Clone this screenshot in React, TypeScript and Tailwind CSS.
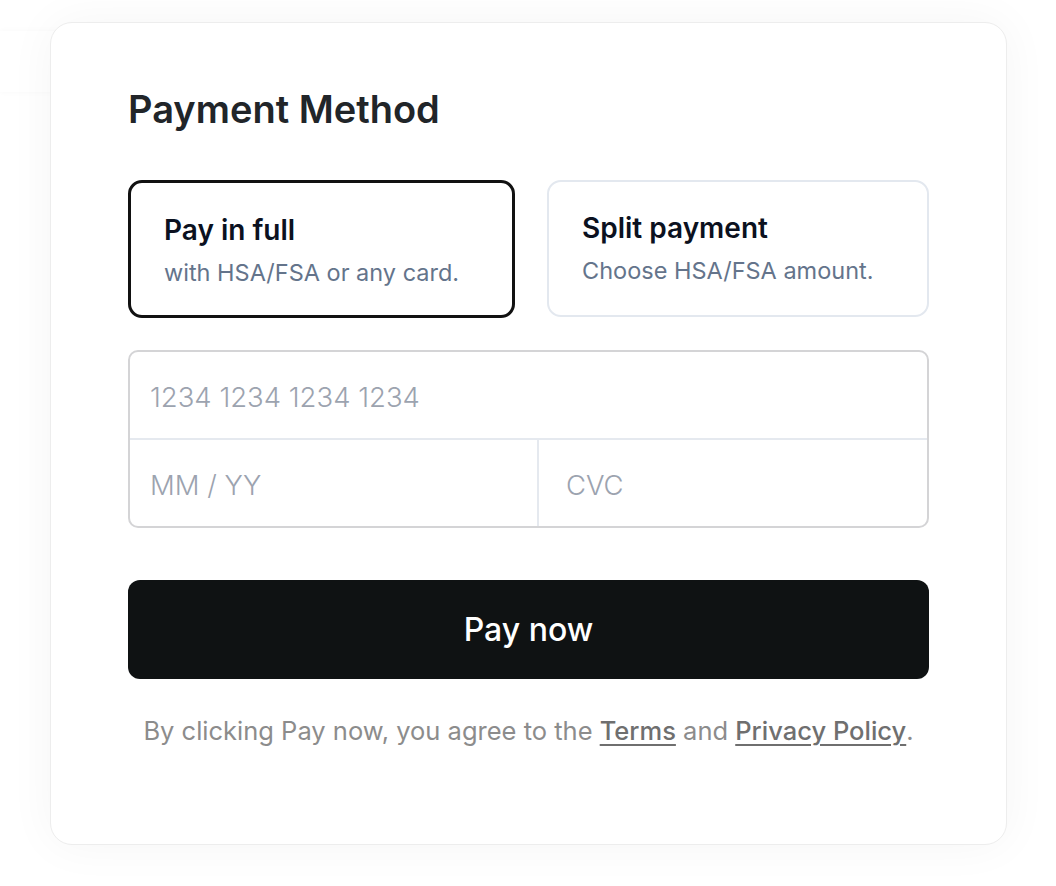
import { useState } from "react";

type Plan = "full" | "split";

const plans: { id: Plan; title: string; note: string }[] = [
  { id: "full", title: "Pay in full", note: "with HSA/FSA or any card." },
  { id: "split", title: "Split payment", note: "Choose HSA/FSA amount." },
];

export default function App() {
  const [plan, setPlan] = useState<Plan>("full");

  return (
    <div
      className="relative min-h-[886px] w-full bg-white pt-[22px] pl-[50px] pr-[49px] pb-[41px]"
      style={{ fontFamily: "Inter, 'Noto Sans', sans-serif" }}
    >
      {/* faint leftover strip in the top-left corner */}
      <div className="absolute left-0 top-[31px] h-[61px] w-[172px] bg-white/70 shadow-[0_0_6px_rgba(0,0,0,0.03)]" />

      <div className="relative rounded-[22px] border border-[#ededed] bg-white px-[77px] pt-[63px] pb-[97px] shadow-[0_0_48px_rgba(0,0,0,0.045)]">
        <h2 className="text-[38px] font-semibold leading-[46px] text-[#212529]">Payment Method</h2>

        {/* plan options */}
        <div className="mt-[48px] grid grid-cols-[387px_1fr] gap-8">
          {plans.map(p => {
            const active = plan === p.id;
            return (
              <button
                key={p.id}
                onClick={() => setPlan(p.id)}
                className={
                  active
                    ? "flex h-[138px] flex-col items-start justify-start rounded-[14px] border-[3px] border-[#111111] px-[33px] pt-[30px] text-left"
                    : "flex h-[137px] flex-col items-start justify-start rounded-[14px] border-2 border-[#e3e8ef] px-[33px] pt-[29px] text-left"
                }
              >
                <p className="text-[28px] font-semibold leading-[34px] text-[#0b1120]">{p.title}</p>
                <p className="mt-[11px] text-[23.5px] leading-[30px] text-[#64748b]">{p.note}</p>
              </button>
            );
          })}
        </div>

        {/* card fields */}
        <div className="mt-[32px] overflow-hidden rounded-[10px] border-2 border-[#d4d4d6]">
          <input
            placeholder="1234 1234 1234 1234"
            className="block h-[86px] w-full px-[20px] pt-[3px] text-[27.5px] font-light text-[#374151] outline-none placeholder:text-[#9ca3af]"
          />
          <div className="flex border-t-2 border-[#e5e9ef]">
            <input
              placeholder="MM / YY"
              className="block h-[86px] w-[407px] px-[20px] pt-[3px] text-[27.5px] font-light text-[#374151] outline-none placeholder:text-[#9ca3af]"
            />
            <input
              placeholder="CVC"
              className="block h-[86px] min-w-0 flex-1 border-l-2 border-[#e5e9ef] px-[27px] pt-[3px] text-[27.5px] font-light text-[#374151] outline-none placeholder:text-[#9ca3af]"
            />
          </div>
        </div>

        <button className="mt-[52px] flex h-[99px] w-full items-center justify-center rounded-[12px] bg-[#0f1213] text-[32px] font-medium text-white">
          Pay now
        </button>

        <p className="mt-[36px] text-center text-[25.5px] leading-[32px] text-[#8c8c8c]">
          By clicking Pay now, you agree to the{" "}
          <a href="#" className="font-medium text-[#6f6f6f] underline underline-offset-4">
            Terms
          </a>{" "}
          and{" "}
          <a href="#" className="font-medium text-[#6f6f6f] underline underline-offset-4">
            Privacy Policy
          </a>
          .
        </p>
      </div>
    </div>
  );
}
